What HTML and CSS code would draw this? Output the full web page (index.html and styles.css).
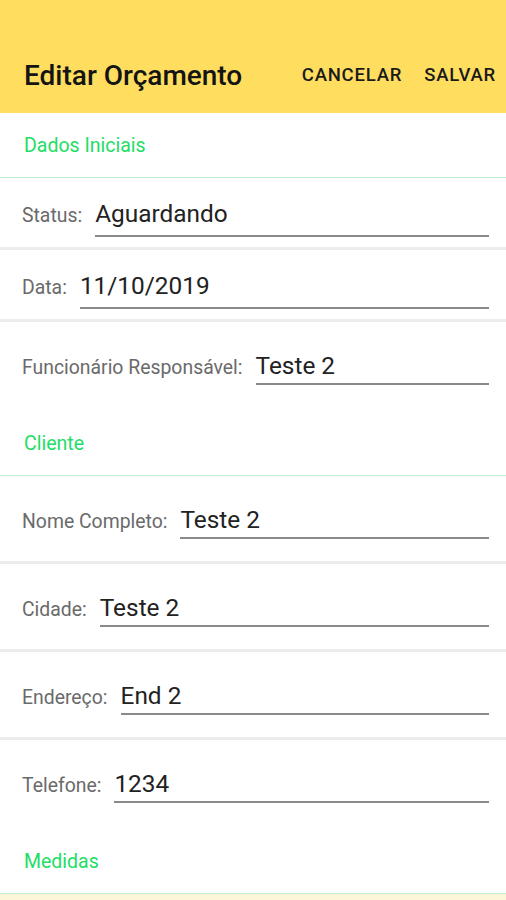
FILE: index.html
```html
<!DOCTYPE html>
<html lang="pt-BR">

<head>
  <meta charset="utf8">
  <meta name="viewport" content="width=device-width, initial-scale=1.0">
  <title>Editar Orçamento</title>
  <link rel="stylesheet" href="styles.css">
</head>

<body>
  <header class="toolbar">
    <h1 class="toolbar-title">Editar Orçamento</h1>
    <div class="toolbar-actions">
      <button class="action">Cancelar</button>
      <button class="action">Salvar</button>
    </div>
  </header>

  <main class="form">
    <div class="section-title">Dados Iniciais</div>
    <div class="row row-compact">
      <span class="label">Status:</span>
      <div class="field">Aguardando</div>
    </div>
    <div class="row row-compact">
      <span class="label">Data:</span>
      <div class="field">11/10/2019</div>
    </div>
    <div class="row">
      <span class="label">Funcionário Responsável:</span>
      <div class="field">Teste 2</div>
    </div>

    <div class="section-title">Cliente</div>
    <div class="row">
      <span class="label">Nome Completo:</span>
      <div class="field">Teste 2</div>
    </div>
    <div class="row">
      <span class="label">Cidade:</span>
      <div class="field">Teste 2</div>
    </div>
    <div class="row">
      <span class="label">Endereço:</span>
      <div class="field">End 2</div>
    </div>
    <div class="row">
      <span class="label">Telefone:</span>
      <div class="field">1234</div>
    </div>

    <div class="section-title">Medidas</div>
    <div class="measures"></div>
  </main>
</body>

</html>
```

FILE: styles.css
```css
html,
body {
  margin: 0;
}

body {
  font-family: Roboto, 'Liberation Sans', Arial, sans-serif;
  background-color: #fff;
  color: #222;
}

.toolbar {
  height: 76px;
  padding-top: 37px;
  background-color: #ffde5f;
  display: flex;
  align-items: center;
  justify-content: space-between;
}

.toolbar-title {
  margin: 0 0 0 24px;
  font-size: 28px;
  font-weight: 500;
  color: #141414;
}

.toolbar-actions {
  display: flex;
  gap: 22px;
  padding-right: 10px;
}

.action {
  padding: 0;
  border: 0;
  background: none;
  font-family: inherit;
  font-size: 18.5px;
  font-weight: 500;
  letter-spacing: 0.8px;
  text-transform: uppercase;
  color: #1a1a1a;
}

.section-title {
  padding: 21px 24px 19px;
  font-size: 19.5px;
  line-height: 24px;
  color: #22dd66;
  border-bottom: 1px solid #bdf0cb;
}

.row {
  display: flex;
  align-items: baseline;
  gap: 13px;
  padding: 30px 17px 22px 22px;
  border-bottom: 3px solid #ececec;
}

.row-compact {
  padding-top: 22px;
  padding-bottom: 10px;
}

/* last field of a section has no divider */
.row:has(+ .section-title) {
  padding-bottom: 26px;
  border-bottom: 0;
}

.label {
  flex: none;
  font-size: 19.4px;
  color: #6a6a6a;
  white-space: nowrap;
}

.field {
  flex: 1;
  font-size: 24.4px;
  line-height: 28px;
  padding-bottom: 3px;
  border-bottom: 2px solid #8a8a8a;
  color: #222;
}

.row-compact .field {
  padding-bottom: 7px;
}

.measures {
  height: 40px;
  background-color: #fdf6d8;
}
```
